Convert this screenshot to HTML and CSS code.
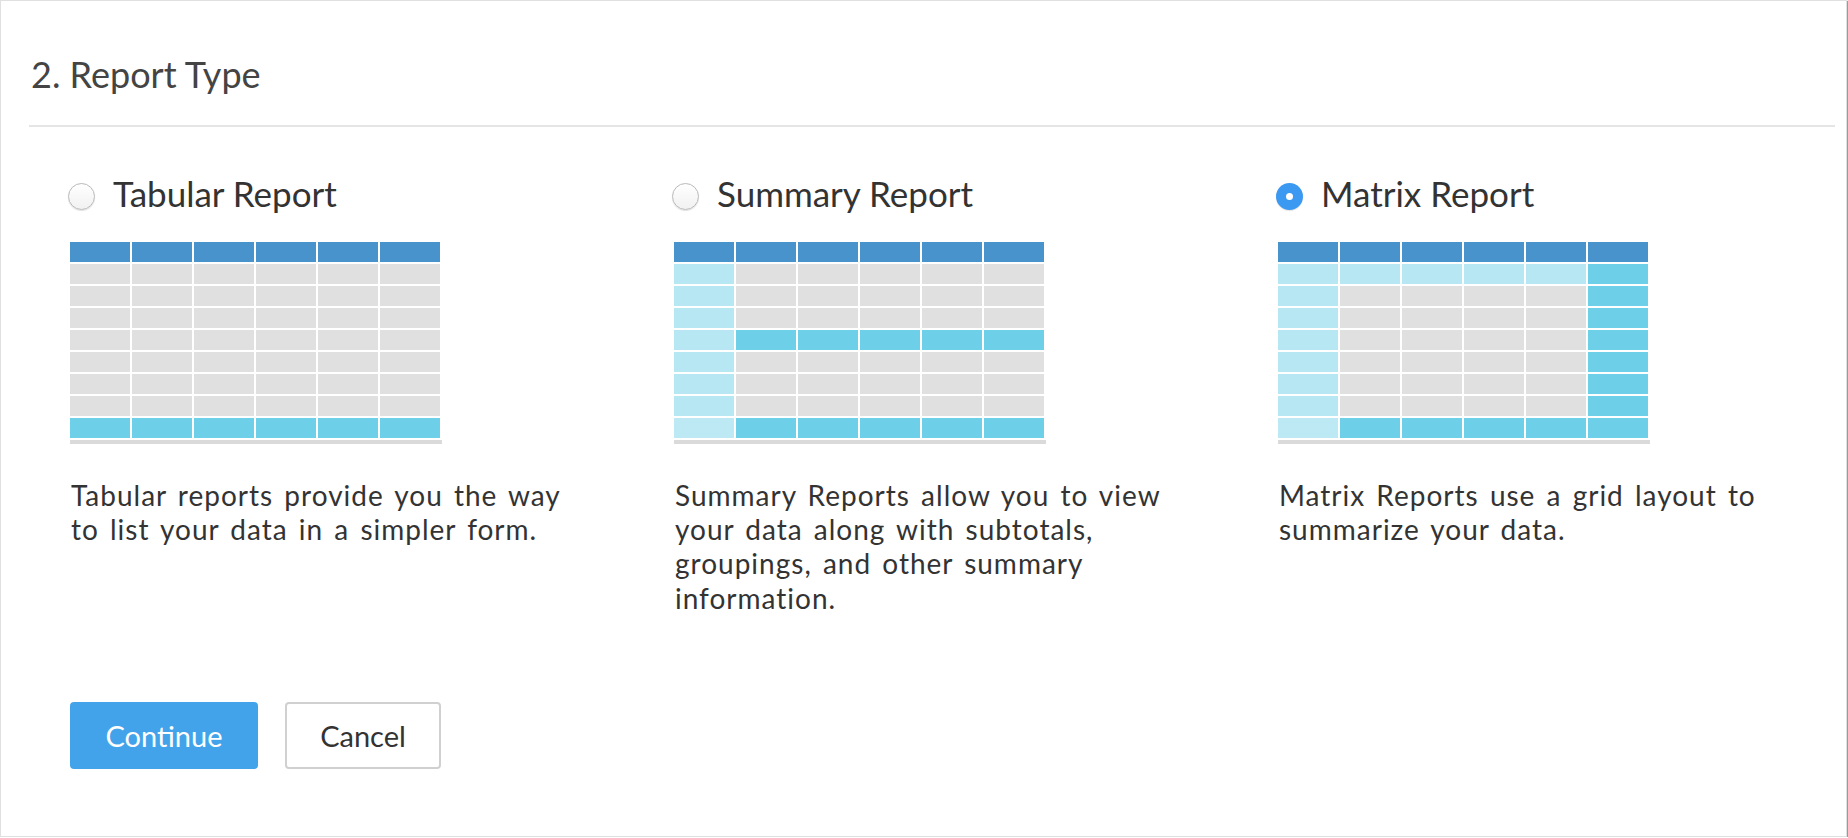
FILE: index.html
```html
<!DOCTYPE html>
<html>
<head>
<meta charset="utf-8">
<link rel="stylesheet" href="styles.css">
</head>
<body>
<div class="card">
  <div class="header"><h2 class="title">2. Report Type</h2></div>
  <div class="options">
    <div class="option">
      <label class="radio-row"><span class="radio"></span><span class="label">Tabular Report</span></label>
      <div class="preview">
        <div class="grid">
          <i class="h"></i><i class="h"></i><i class="h"></i><i class="h"></i><i class="h"></i><i class="h"></i>
          <i class="g"></i><i class="g"></i><i class="g"></i><i class="g"></i><i class="g"></i><i class="g"></i>
          <i class="g"></i><i class="g"></i><i class="g"></i><i class="g"></i><i class="g"></i><i class="g"></i>
          <i class="g"></i><i class="g"></i><i class="g"></i><i class="g"></i><i class="g"></i><i class="g"></i>
          <i class="g"></i><i class="g"></i><i class="g"></i><i class="g"></i><i class="g"></i><i class="g"></i>
          <i class="g"></i><i class="g"></i><i class="g"></i><i class="g"></i><i class="g"></i><i class="g"></i>
          <i class="g"></i><i class="g"></i><i class="g"></i><i class="g"></i><i class="g"></i><i class="g"></i>
          <i class="g"></i><i class="g"></i><i class="g"></i><i class="g"></i><i class="g"></i><i class="g"></i>
          <i class="c"></i><i class="c"></i><i class="c"></i><i class="c"></i><i class="c"></i><i class="c"></i>
        </div>
        <div class="base"></div>
      </div>
      <p class="desc">Tabular reports provide you the way<br>to list your data in a simpler form.</p>
    </div>
    <div class="option">
      <label class="radio-row"><span class="radio"></span><span class="label">Summary Report</span></label>
      <div class="preview">
        <div class="grid">
          <i class="h"></i><i class="h"></i><i class="h"></i><i class="h"></i><i class="h"></i><i class="h"></i>
          <i class="l"></i><i class="g"></i><i class="g"></i><i class="g"></i><i class="g"></i><i class="g"></i>
          <i class="l"></i><i class="g"></i><i class="g"></i><i class="g"></i><i class="g"></i><i class="g"></i>
          <i class="l"></i><i class="g"></i><i class="g"></i><i class="g"></i><i class="g"></i><i class="g"></i>
          <i class="l"></i><i class="c"></i><i class="c"></i><i class="c"></i><i class="c"></i><i class="c"></i>
          <i class="l"></i><i class="g"></i><i class="g"></i><i class="g"></i><i class="g"></i><i class="g"></i>
          <i class="l"></i><i class="g"></i><i class="g"></i><i class="g"></i><i class="g"></i><i class="g"></i>
          <i class="l"></i><i class="g"></i><i class="g"></i><i class="g"></i><i class="g"></i><i class="g"></i>
          <i class="ll"></i><i class="c"></i><i class="c"></i><i class="c"></i><i class="c"></i><i class="c"></i>
        </div>
        <div class="base"></div>
      </div>
      <p class="desc">Summary Reports allow you to view<br>your data along with subtotals,<br>groupings, and other summary<br>information.</p>
    </div>
    <div class="option">
      <label class="radio-row"><span class="radio checked"></span><span class="label">Matrix Report</span></label>
      <div class="preview">
        <div class="grid">
          <i class="h"></i><i class="h"></i><i class="h"></i><i class="h"></i><i class="h"></i><i class="h"></i>
          <i class="l"></i><i class="l"></i><i class="l"></i><i class="l"></i><i class="l"></i><i class="c"></i>
          <i class="l"></i><i class="g"></i><i class="g"></i><i class="g"></i><i class="g"></i><i class="c"></i>
          <i class="l"></i><i class="g"></i><i class="g"></i><i class="g"></i><i class="g"></i><i class="c"></i>
          <i class="l"></i><i class="g"></i><i class="g"></i><i class="g"></i><i class="g"></i><i class="c"></i>
          <i class="l"></i><i class="g"></i><i class="g"></i><i class="g"></i><i class="g"></i><i class="c"></i>
          <i class="l"></i><i class="g"></i><i class="g"></i><i class="g"></i><i class="g"></i><i class="c"></i>
          <i class="l"></i><i class="g"></i><i class="g"></i><i class="g"></i><i class="g"></i><i class="c"></i>
          <i class="ll"></i><i class="c"></i><i class="c"></i><i class="c"></i><i class="c"></i><i class="c"></i>
        </div>
        <div class="base"></div>
      </div>
      <p class="desc">Matrix Reports use a grid layout to<br>summarize your data.</p>
    </div>
  </div>
  <div class="actions">
    <button class="btn btn-primary">Continue</button>
    <button class="btn btn-default">Cancel</button>
  </div>
</div>
</body>
</html>
```
FILE: styles.css
```css
html, body {
  margin: 0;
  padding: 0;
  background: #ffffff;
}
body {
  font-family: Lato, "Open Sans", sans-serif;
  color: #333333;
}
.card {
  box-sizing: border-box;
  width: 1847px;
  height: 837px;
  border: 1px solid #e0e0e0;
  box-shadow: 1px 1px 1px #9a9a9a;
  background: #ffffff;
}
.header {
  margin: 0 11px 0 28px;
  height: 124px;
  border-bottom: 2px solid #e5e5e5;
  display: flex;
  align-items: center;
}
.title {
  margin: 22px 0 0 2px;
  font-size: 36px;
  font-weight: 400;
  color: #444444;
}
.options {
  display: grid;
  grid-template-columns: 604px 604px 604px;
  padding: 53px 0 0 67px;
}
.radio-row {
  display: flex;
  align-items: center;
  height: 32px;
}
.radio {
  box-sizing: border-box;
  width: 27px;
  height: 27px;
  border-radius: 50%;
  border: 1px solid #b9b9b9;
  background: linear-gradient(#ffffff, #f1f1f1);
  box-shadow: 0 1px 1px rgba(0,0,0,0.12);
  flex: none;
}
.radio.checked {
  border: none;
  background: #3b99f2;
  display: flex;
  align-items: center;
  justify-content: center;
}
.radio.checked::after {
  content: "";
  width: 7px;
  height: 7px;
  border-radius: 50%;
  background: #ffffff;
}
.label {
  margin-left: 18px;
  font-size: 35px;
  color: #333333;
  position: relative;
  top: -3px;
}
.preview {
  margin: 30px 0 0 2px;
  width: 372px;
}
.grid {
  display: grid;
  grid-template-columns: repeat(6, 60px);
  grid-auto-rows: 20px;
  gap: 2px;
}
.grid i {
  display: block;
}
.grid .h { background: #4893cb; }
.grid .g { background: #e0e0e0; }
.grid .l { background: #b7e7f3; }
.grid .ll { background: #bde9f4; }
.grid .c { background: #6dcfe8; }
.base {
  margin-top: 2px;
  height: 4px;
  background: #dadada;
}
.desc {
  margin: 34px 0 0 3px;
  font-size: 28px;
  line-height: 34.2px;
  letter-spacing: 1px;
  word-spacing: 3px;
  color: #333333;
}
.actions {
  display: flex;
  gap: 27px;
  padding: 87px 0 0 69px;
}
.btn {
  box-sizing: border-box;
  height: 67px;
  border-radius: 4px;
  font-family: Lato, "Open Sans", sans-serif;
  font-size: 29px;
  cursor: pointer;
}
.btn-primary {
  width: 188px;
  background: #43a3ea;
  border: none;
  color: #ffffff;
}
.btn-default {
  width: 156px;
  background: #ffffff;
  border: 2px solid #d0d0d0;
  color: #333333;
}
```
